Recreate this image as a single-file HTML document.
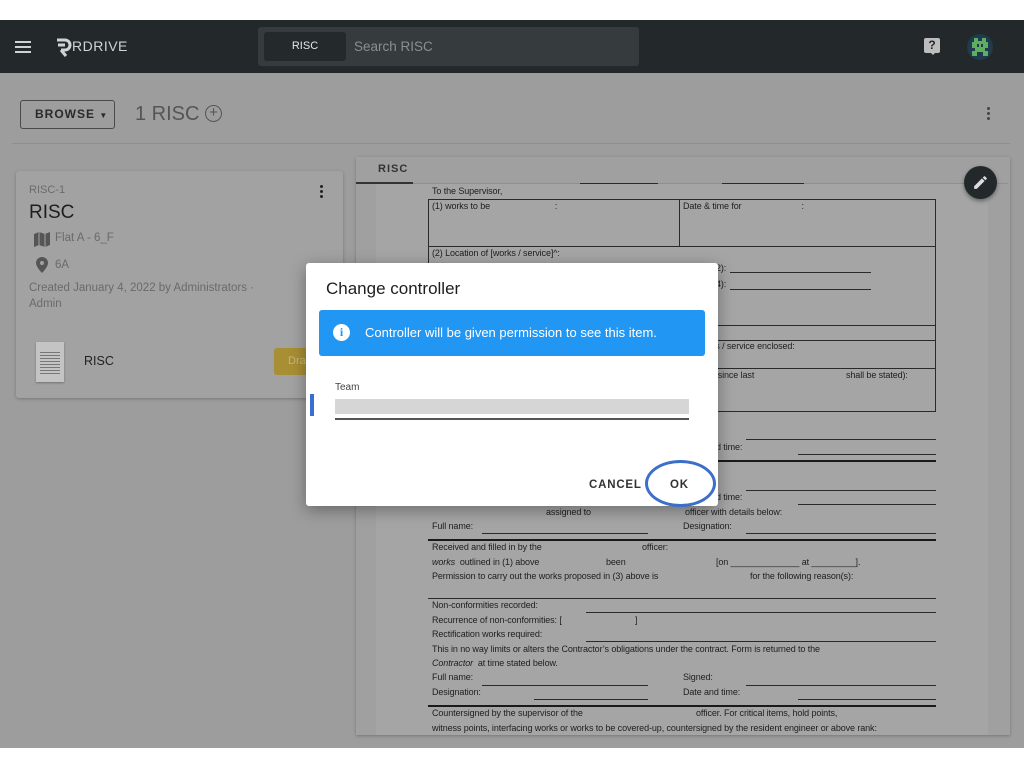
<!DOCTYPE html>
<html><head><meta charset="utf-8"><style>
*{box-sizing:border-box;margin:0;padding:0}
body{width:1024px;height:768px;background:#fff;font-family:"Liberation Sans",sans-serif;position:relative;overflow:hidden}
.a{position:absolute}
.hdr{left:0;top:20px;width:1024px;height:53px;background:#23292b}
.main{left:0;top:73px;width:1024px;height:675px;background:#9d9d9d}
.d{position:absolute;font-family:"Liberation Sans Narrow","Liberation Sans",sans-serif;font-size:9px;color:#1e1e1e;white-space:nowrap;letter-spacing:-0.1px}
.l{position:absolute;height:1px;background:#2a2a2a}
.tl{position:absolute;height:2px;background:#1a1a1a}
.bx{position:absolute;border:1.3px solid #2a2a2a}
</style></head><body>
<div class="a hdr"></div>
<div class="a" style="left:15px;top:41px;width:16px;height:2px;background:#cfd2d2"></div>
<div class="a" style="left:15px;top:46px;width:16px;height:2px;background:#cfd2d2"></div>
<div class="a" style="left:15px;top:51px;width:16px;height:2px;background:#cfd2d2"></div>
<svg class="a" style="left:55px;top:37px" width="18" height="20" viewBox="0 0 18 20"><path d="M2 3h8a5 5 0 0 1 0 10H6" fill="none" stroke="#d0d3d3" stroke-width="3"/><path d="M3 8h7" stroke="#d0d3d3" stroke-width="3"/><path d="M6 13l5 6" stroke="#d0d3d3" stroke-width="3"/></svg>
<div class="a" style="left:72px;top:38px;color:#d0d3d3;font-size:14px;letter-spacing:0.5px">RDRIVE</div>
<div class="a" style="left:258px;top:27px;width:381px;height:39px;background:#363b3d;border-radius:3px"></div>
<div class="a" style="left:264px;top:32px;width:82px;height:29px;background:#24292b;border-radius:3px;color:#e6e6e6;font-size:11px;text-align:center;line-height:29px">RISC</div>
<div class="a" style="left:354px;top:39px;color:#8a8f90;font-size:13.5px">Search RISC</div>
<div class="a" style="left:924px;top:38px;width:16px;height:15px;background:#bdbdbd;border-radius:2px;color:#23292b;font-size:12px;font-weight:bold;text-align:center;line-height:15px">?</div>
<div class="a" style="left:930px;top:52px;width:0;height:0;border-left:3px solid transparent;border-right:3px solid transparent;border-top:3px solid #bdbdbd"></div>
<svg class="a" style="left:966px;top:33px" width="28" height="28" viewBox="0 0 28 28"><circle cx="14" cy="14" r="13" fill="#1f3b4d"/><path d="M8 5h4v3h4V5h4v4h2v6h-3v3h3v5h-5v-4h-6v4H6v-5h3v-3H6V9h2z" fill="#5fae5f"/><rect x="11" y="11" width="2" height="3" fill="#1f3b4d"/><rect x="15" y="11" width="2" height="3" fill="#1f3b4d"/></svg>

<div class="a main"></div>
<div class="a" style="left:20px;top:100px;width:95px;height:29px;border:1px solid #4a4a4a;border-radius:3px;font-size:12px;font-weight:bold;letter-spacing:1px;color:#2a2a2a;line-height:27px;padding-left:14px">BROWSE <span style="font-size:8px">▼</span></div>
<div class="a" style="left:135px;top:103px;font-size:20px;color:#555">1 RISC</div>
<div class="a" style="left:205px;top:105px;width:17px;height:17px;border:1.5px solid #555;border-radius:50%;color:#555;font-size:15px;line-height:13px;text-align:center">+</div>
<div class="a" style="left:987px;top:107px;width:3px;height:3px;background:#444;border-radius:50%;box-shadow:0 5px 0 #444,0 10px 0 #444"></div>
<div class="a" style="left:12px;top:143px;width:998px;height:1px;background:#8f8f8f"></div>

<div class="a" style="left:16px;top:171px;width:327px;height:227px;background:#a2a2a2;border-radius:3px;box-shadow:0 1px 3px rgba(0,0,0,.25)"></div>
<div class="a" style="left:29px;top:184px;font-size:11px;color:#6a6a6a">RISC-1</div>
<div class="a" style="left:29px;top:202px;font-size:19px;color:#1e1e1e">RISC</div>
<div class="a" style="left:320px;top:185px;width:3px;height:3px;background:#222;border-radius:50%;box-shadow:0 5px 0 #222,0 10px 0 #222"></div>
<svg class="a" style="left:34px;top:232px" width="16" height="15" viewBox="0 0 16 15"><path d="M0 2l5-2 6 2 5-2v13l-5 2-6-2-5 2z" fill="#555"/><path d="M5 0v13M11 2v13" stroke="#a2a2a2" stroke-width="1"/></svg>
<div class="a" style="left:55px;top:232px;font-size:11.5px;color:#6a6a6a">Flat A - 6_F</div>
<svg class="a" style="left:36px;top:257px" width="12" height="16" viewBox="0 0 12 16"><path d="M6 0a6 6 0 0 1 6 6c0 4-6 10-6 10S0 10 0 6a6 6 0 0 1 6-6z" fill="#555"/><circle cx="6" cy="6" r="2" fill="#a2a2a2"/></svg>
<div class="a" style="left:55px;top:259px;font-size:11.5px;color:#6a6a6a">6A</div>
<div class="a" style="left:29px;top:280px;font-size:11.5px;color:#6a6a6a;line-height:16px;width:250px">Created January 4, 2022 by Administrators · Admin</div>
<div class="a" style="left:36px;top:342px;width:28px;height:40px;background:#c4c4c4;box-shadow:0 1px 2px rgba(0,0,0,.3)"></div>
<div class="a" style="left:40px;top:350px;width:20px;height:24px;background:repeating-linear-gradient(#c4c4c4 0 2px,#777 2px 3px)"></div>
<div class="a" style="left:84px;top:354px;font-size:12.5px;color:#222">RISC</div>
<div class="a" style="left:274px;top:348px;width:40px;height:27px;background:#a88f34;border-radius:3px;color:#c9b67a;font-size:11px;line-height:27px;padding-left:14px">Dra</div>

<div class="a" style="left:356px;top:157px;width:654px;height:578px;background:#a0a0a0;box-shadow:0 1px 3px rgba(0,0,0,.25)"></div>
<div class="a" style="left:376px;top:183px;width:612px;height:552px;background:#a5a5a5"></div>
<div class="a" style="left:378px;top:163px;font-size:11px;font-weight:bold;letter-spacing:1px;color:#333">RISC</div>
<div class="a" style="left:356px;top:182px;width:57px;height:2px;background:#333"></div>
<div class="a" style="left:413px;top:183px;width:595px;height:1px;background:#8f8f8f"></div>
<div class="l" style="left:580px;top:183px;width:78px"></div>
<div class="l" style="left:722px;top:183px;width:82px"></div>
<div class="a" style="left:964px;top:166px;width:33px;height:33px;border-radius:50%;background:#23292b;box-shadow:0 2px 4px rgba(0,0,0,.4)"></div>
<svg class="a" style="left:972px;top:174px" width="17" height="17" viewBox="0 0 24 24"><path d="M3 17.25V21h3.75L17.8 9.94l-3.75-3.75L3 17.25zM20.7 7.04a1 1 0 0 0 0-1.41l-2.34-2.34a1 1 0 0 0-1.41 0l-1.830 1.83 3.75 3.75 1.83-1.83z" fill="#ddd"/></svg>

<div class="d" style="left:432px;top:186px">To the Supervisor,</div>
<div class="bx" style="left:428px;top:199px;width:508px;height:48px"></div>
<div class="a" style="left:679px;top:199px;width:1.3px;height:48px;background:#2a2a2a"></div>
<div class="d" style="left:432px;top:201px">(1) works to be&nbsp;&nbsp;&nbsp;&nbsp;&nbsp;&nbsp;&nbsp;&nbsp;&nbsp;&nbsp;&nbsp;&nbsp;&nbsp;&nbsp;&nbsp;&nbsp;&nbsp;&nbsp;&nbsp;&nbsp;&nbsp;&nbsp;&nbsp;&nbsp;&nbsp;&nbsp;&nbsp;:</div>
<div class="d" style="left:683px;top:201px">Date &amp; time for&nbsp;&nbsp;&nbsp;&nbsp;&nbsp;&nbsp;&nbsp;&nbsp;&nbsp;&nbsp;&nbsp;&nbsp;&nbsp;&nbsp;&nbsp;&nbsp;&nbsp;&nbsp;&nbsp;&nbsp;&nbsp;&nbsp;&nbsp;&nbsp;&nbsp;:</div>
<div class="bx" style="left:428px;top:246px;width:508px;height:80px"></div>
<div class="d" style="left:432px;top:248px">(2) Location of [works / service]^:</div>
<div class="d" style="left:716px;top:263px">2):</div><div class="l" style="left:730px;top:272px;width:141px"></div>
<div class="d" style="left:716px;top:279px">4):</div><div class="l" style="left:730px;top:289px;width:141px"></div>
<div class="bx" style="left:428px;top:325px;width:508px;height:16px"></div>
<div class="bx" style="left:428px;top:340px;width:508px;height:29px"></div>
<div class="d" style="left:708px;top:341px">rks / service enclosed:</div>
<div class="bx" style="left:428px;top:368px;width:508px;height:44px"></div>
<div class="d" style="left:708px;top:370px">ut since last</div>
<div class="d" style="left:846px;top:370px">shall be stated):</div>
<div class="l" style="left:746px;top:439px;width:190px"></div>
<div class="d" style="left:716px;top:442px">d time:</div>
<div class="l" style="left:798px;top:454px;width:138px"></div>
<div class="tl" style="left:428px;top:460px;width:508px"></div>
<div class="l" style="left:746px;top:490px;width:190px"></div>
<div class="d" style="left:716px;top:492px">d time:</div>
<div class="l" style="left:798px;top:504px;width:138px"></div>
<div class="d" style="left:546px;top:507px">assigned to</div>
<div class="d" style="left:685px;top:507px">officer with details below:</div>
<div class="d" style="left:432px;top:521px">Full name:</div>
<div class="l" style="left:482px;top:533px;width:166px"></div>
<div class="d" style="left:683px;top:521px">Designation:</div>
<div class="l" style="left:746px;top:533px;width:190px"></div>
<div class="tl" style="left:428px;top:539px;width:508px"></div>
<div class="d" style="left:432px;top:542px">Received and filled in by the</div>
<div class="d" style="left:642px;top:542px">officer:</div>
<div class="d" style="left:432px;top:557px"><i>works</i>&nbsp; outlined in (1) above</div>
<div class="d" style="left:606px;top:557px">been</div>
<div class="d" style="left:716px;top:557px">[on ______________ at _________].</div>
<div class="d" style="left:432px;top:571px">Permission to carry out the works proposed in (3) above is</div>
<div class="d" style="left:750px;top:571px">for the following reason(s):</div>
<div class="l" style="left:428px;top:598px;width:508px"></div>
<div class="d" style="left:432px;top:600px">Non-conformities recorded:</div>
<div class="l" style="left:586px;top:612px;width:350px"></div>
<div class="d" style="left:432px;top:615px">Recurrence of non-conformities: [</div>
<div class="d" style="left:635px;top:615px">]</div>
<div class="d" style="left:432px;top:629px">Rectification works required:</div>
<div class="l" style="left:586px;top:641px;width:350px"></div>
<div class="d" style="left:432px;top:644px">This in no way limits or alters the Contractor’s obligations under the contract. Form is returned to the</div>
<div class="d" style="left:432px;top:658px"><i>Contractor</i>&nbsp; at time stated below.</div>
<div class="d" style="left:432px;top:672px">Full name:</div>
<div class="l" style="left:482px;top:685px;width:166px"></div>
<div class="d" style="left:683px;top:672px">Signed:</div>
<div class="l" style="left:746px;top:685px;width:190px"></div>
<div class="d" style="left:432px;top:687px">Designation:</div>
<div class="l" style="left:534px;top:699px;width:114px"></div>
<div class="d" style="left:683px;top:687px">Date and time:</div>
<div class="l" style="left:798px;top:699px;width:138px"></div>
<div class="tl" style="left:428px;top:705px;width:508px"></div>
<div class="d" style="left:432px;top:708px">Countersigned by the supervisor of the</div>
<div class="d" style="left:696px;top:708px">officer. For critical items, hold points,</div>
<div class="d" style="left:432px;top:723px">witness points, interfacing works or works to be covered-up, countersigned by the resident engineer or above rank:</div>

<div class="a" style="left:306px;top:263px;width:412px;height:243px;background:#fff;border-radius:3px;box-shadow:0 4px 16px rgba(0,0,0,.35)"></div>
<div class="a" style="left:326px;top:279px;font-size:17px;color:#1e1e1e">Change controller</div>
<div class="a" style="left:319px;top:310px;width:386px;height:46px;background:#2196f3;border-radius:3px"></div>
<div class="a" style="left:333px;top:324px;width:17px;height:17px;border-radius:50%;background:#fff;color:#2196f3;font-size:12px;font-weight:bold;text-align:center;line-height:17px;font-family:'Liberation Serif',serif">i</div>
<div class="a" style="left:365px;top:325px;font-size:13px;color:#fff">Controller will be given permission to see this item.</div>
<div class="a" style="left:335px;top:382px;font-size:10px;color:#444">Team</div>
<div class="a" style="left:335px;top:399px;width:354px;height:15px;background:#d6d6d6"></div>
<div class="a" style="left:335px;top:418px;width:354px;height:2px;background:#555"></div>
<div class="a" style="left:310px;top:394px;width:4px;height:22px;background:#3a6ed0"></div>
<div class="a" style="left:589px;top:479px;font-size:11.5px;font-weight:bold;letter-spacing:0.8px;color:#333">CANCEL</div>
<div class="a" style="left:645px;top:460px;width:71px;height:47px;border:3px solid #3c6fc8;border-radius:50%"></div>
<div class="a" style="left:670px;top:479px;font-size:11.5px;font-weight:bold;letter-spacing:0.8px;color:#333">OK</div>
</body></html>
